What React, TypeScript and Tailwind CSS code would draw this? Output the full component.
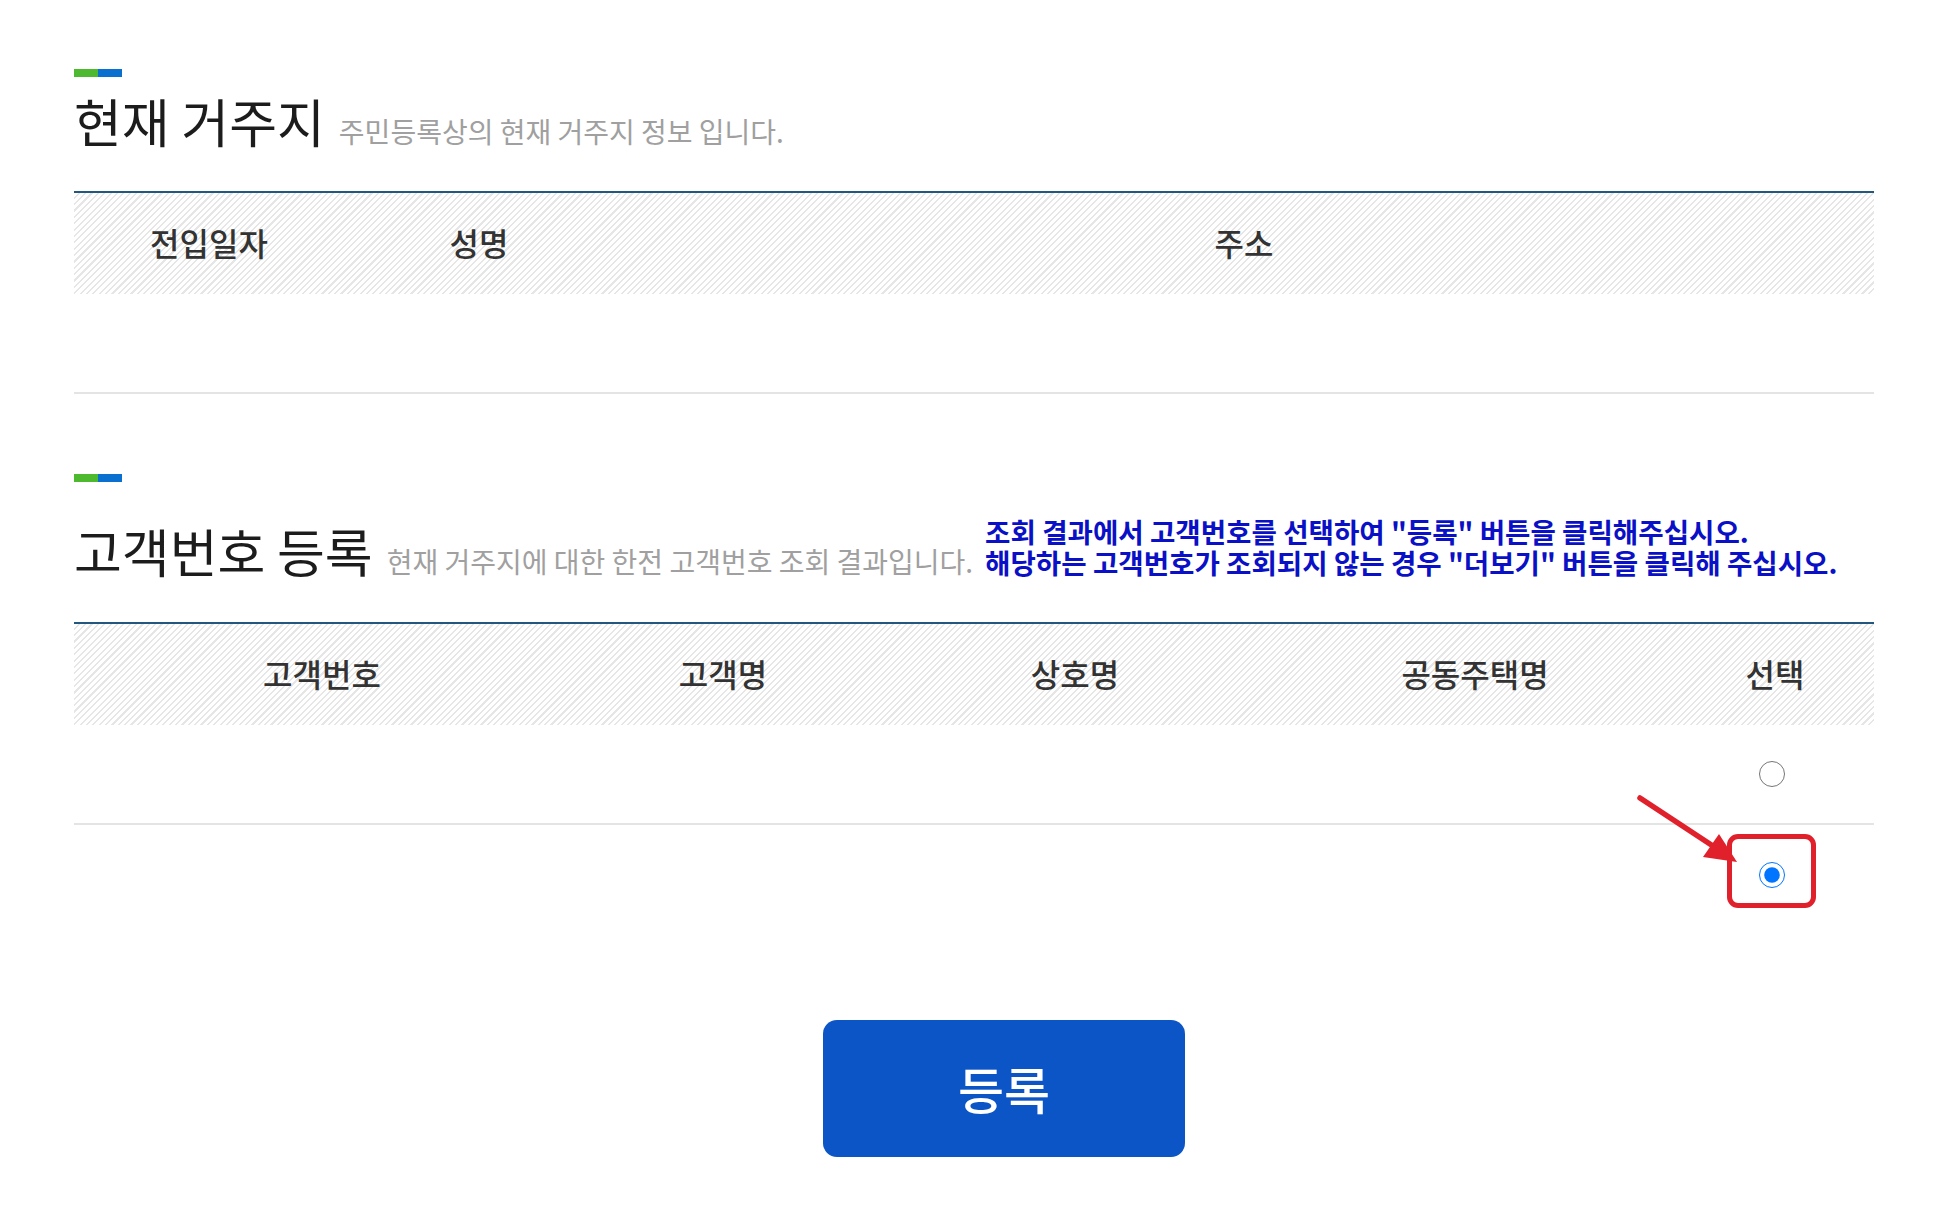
import React from 'react';

const font = "font-['Noto_Sans_CJK_KR','Noto_Sans',sans-serif]";
const stripes =
  'bg-[repeating-linear-gradient(135deg,#ffffff_0px,#ffffff_3px,#e6e6e6_3px,#e6e6e6_4.5px)]';

function Accent() {
  return (
    <div className="flex h-2 w-12">
      <div className="w-6 bg-[#4cb92e]" />
      <div className="w-6 bg-[#0a70cf]" />
    </div>
  );
}

const residenceCols = ['전입일자', '성명', '주소'];
const customerCols = ['고객번호', '고객명', '상호명', '공동주택명', '선택'];

export default function App() {
  return (
    <div className={`relative min-h-[1205px] bg-white ${font}`}>
      <div className="ml-[74px] w-[1800px] pt-[69px]">
        {/* 현재 거주지 */}
        <Accent />
        <div className="mt-[14px] mb-[39px] flex items-baseline">
          <h2 className="text-[52px] leading-[60px] font-normal text-[#1c1c1c]">현재 거주지</h2>
          <span className="ml-[14px] text-[28px] text-[#a0a0a0]">주민등록상의 현재 거주지 정보 입니다.</span>
        </div>
        <div className="border-t-2 border-[#22587f]">
          <div className={`grid h-[101px] grid-cols-[15%_15%_70%] items-center pb-[3px] ${stripes}`}>
            {residenceCols.map((c) => (
              <div key={c} className="text-center text-[32px] font-medium text-[#333333]">
                {c}
              </div>
            ))}
          </div>
          <div className="h-[100px] border-b-2 border-[#e4e4e4]" />
        </div>

        {/* 고객번호 등록 */}
        <div className="mt-[80px]">
          <Accent />
        </div>
        <div className="mt-[34px] mb-[40px] flex items-end">
          <div className="flex items-baseline">
            <h2 className="text-[52px] leading-[60px] font-normal text-[#1c1c1c]">고객번호 등록</h2>
            <span className="ml-[14px] text-[28px] text-[#a0a0a0]">
              현재 거주지에 대한 한전 고객번호 조회 결과입니다.
            </span>
          </div>
          <div className="mb-[4px] ml-[12px] text-[27.6px] leading-[31px] font-bold text-[#0a10c6]">
            <p>조회 결과에서 고객번호를 선택하여 "등록" 버튼을 클릭해주십시오.</p>
            <p>해당하는 고객번호가 조회되지 않는 경우 "더보기" 버튼을 클릭해 주십시오.</p>
          </div>
        </div>
        <div className="border-t-2 border-[#22587f]">
          <div
            className={`grid h-[101px] grid-cols-[496px_306px_398px_402px_198px] items-center pb-[3px] ${stripes}`}
          >
            {customerCols.map((c) => (
              <div key={c} className="text-center text-[32px] font-medium text-[#333333]">
                {c}
              </div>
            ))}
          </div>
          <div className="grid h-[100px] grid-cols-[496px_306px_398px_402px_198px] items-center border-b-2 border-[#e4e4e4]">
            <div />
            <div />
            <div />
            <div />
            <div className="flex justify-center pr-[6px]">
              <input type="radio" name="custNo" className="h-[26px] w-[26px]" />
            </div>
          </div>
          <div className="grid h-[100px] grid-cols-[496px_306px_398px_402px_198px] items-center">
            <div />
            <div />
            <div />
            <div />
            <div className="flex justify-center pr-[6px]">
              <input type="radio" name="custNo" defaultChecked className="h-[26px] w-[26px]" />
            </div>
          </div>
        </div>

        <div className="mt-[95px] flex">
          <button className="ml-[749px] h-[137px] w-[362px] rounded-[14px] bg-[#0c55c6] text-[50px] font-medium text-white">
            등록
          </button>
        </div>
      </div>

      {/* annotation: arrow + highlight box */}
      <svg
        className="pointer-events-none absolute left-[1630px] top-[790px]"
        width="115"
        height="85"
        viewBox="0 0 115 85"
      >
        <line x1="10" y1="8" x2="86" y2="58" stroke="#e0212b" strokeWidth="5.5" strokeLinecap="round" />
        <polygon points="107,72 73,67 89,44" fill="#e0212b" />
      </svg>
      <div className="pointer-events-none absolute left-[1727px] top-[834px] h-[74px] w-[89px] rounded-[11px] border-[5px] border-[#e0212b]" />
    </div>
  );
}
